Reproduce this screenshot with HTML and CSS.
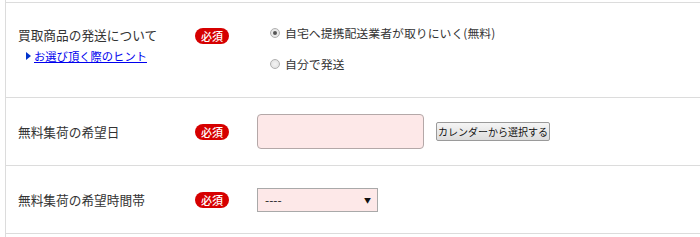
FILE: index.html
```html
<!DOCTYPE html>
<html lang="ja">
<head>
<meta charset="utf-8">
<link rel="stylesheet" href="styles.css">
</head>
<body>
<div class="form">
  <div class="row row-ship">
    <div class="label">
      <div class="label-text">買取商品の発送について</div>
      <a class="hint" href="#"><span class="tri"></span>お選び頂く際のヒント</a>
    </div>
    <div class="req-cell"><span class="req">必須</span></div>
    <div class="field radios">
      <label class="radio"><input type="radio" name="ship" checked><span>自宅へ提携配送業者が取りにいく(無料)</span></label>
      <label class="radio"><input type="radio" name="ship"><span>自分で発送</span></label>
    </div>
  </div>
  <div class="row row-mid">
    <div class="label"><div class="label-text">無料集荷の希望日</div></div>
    <div class="req-cell"><span class="req">必須</span></div>
    <div class="field inline">
      <input class="date" type="text">
      <button class="cal" type="button">カレンダーから選択する</button>
    </div>
  </div>
  <div class="row row-mid row-last">
    <div class="label"><div class="label-text">無料集荷の希望時間帯</div></div>
    <div class="req-cell"><span class="req">必須</span></div>
    <div class="field">
      <div class="select"><span>----</span><span class="arrow">▼</span></div>
    </div>
  </div>
</div>
</body>
</html>
```
FILE: styles.css
```css
* { box-sizing: border-box; }
html, body { margin: 0; padding: 0; background: #fff; }
body {
  font-family: "Noto Sans CJK JP", "Noto Sans", sans-serif;
  color: #333;
  width: 700px;
  height: 237px;
  overflow: hidden;
}
.form {
  margin-left: 5px;
  border-left: 1px solid #dcdcdc;
  padding-top: 2px;
  height: 237px;
}
.row {
  display: grid;
  grid-template-columns: 189px 62px 1fr;
  border-top: 1px solid #dcdcdc;
}
.row-ship { height: 95px; align-items: start; }
.row-mid { height: 68px; align-items: center; }
.row-last { border-bottom: 1px solid #dcdcdc; height: 69px; }
.label { padding-left: 12px; }
.label-text {
  font-size: 12.7px;
  line-height: 20px;
  color: #333;
}
.row-ship .label { padding-top: 22px; }
.hint {
  display: flex;
  align-items: center;
  margin-top: 3px;
  padding-left: 8px;
  font-size: 11.3px;
  line-height: 16px;
  color: #0000ee;
  text-decoration: underline;
}
.tri {
  width: 0; height: 0;
  border-top: 4px solid transparent;
  border-bottom: 4px solid transparent;
  border-left: 5px solid #0033cc;
  margin-right: 3px;
}
.req-cell { display: flex; }
.row-ship .req-cell { padding-top: 25px; }
.req {
  display: inline-block;
  width: 34px;
  height: 16px;
  border-radius: 8px;
  background: #d60000;
  color: #fff;
  font-size: 11px;
  line-height: 16px;
  text-align: center;
  font-weight: 500;
}
.radios {
  padding-top: 20px;
  padding-left: 13px;
  display: flex;
  flex-direction: column;
  gap: 11px;
}
.radio {
  display: flex;
  align-items: center;
  font-size: 11.9px;
  line-height: 20px;
  color: #333;
}
.radio input {
  appearance: none;
  -webkit-appearance: none;
  width: 10px;
  height: 10px;
  margin: 0 5px 0 0;
  border: 1px solid #b0b0b0;
  border-radius: 50%;
  background: radial-gradient(circle, #f4f4f4 0%, #dedede 100%);
  position: relative;
}
.radio input:checked::after {
  content: "";
  position: absolute;
  left: 2px; top: 2px;
  width: 4px; height: 4px;
  border-radius: 50%;
  background: #555;
}
.inline { display: flex; align-items: center; }
.date {
  width: 167px;
  height: 35px;
  border: 1px solid #b4a8a8;
  border-radius: 4px;
  background: #fde8e8;
  margin: 0;
  padding: 0;
}
.cal {
  margin-left: 12px;
  height: 19px;
  padding: 0 1px;
  font-family: "Noto Sans CJK JP", sans-serif;
  font-size: 10px;
  line-height: 17px;
  color: #111;
  background: linear-gradient(#f5f5f5, #dcdcdc);
  border: 1px solid #9a9a9a;
  border-radius: 2px;
}
.select {
  width: 121px;
  height: 24px;
  border: 1px solid #a9a9a9;
  background: #fde8e8;
  display: flex;
  align-items: center;
  justify-content: space-between;
  padding: 0 6px 0 7px;
  font-size: 12px;
  color: #222;
}
.arrow { font-size: 7px; color: #111; }
```
